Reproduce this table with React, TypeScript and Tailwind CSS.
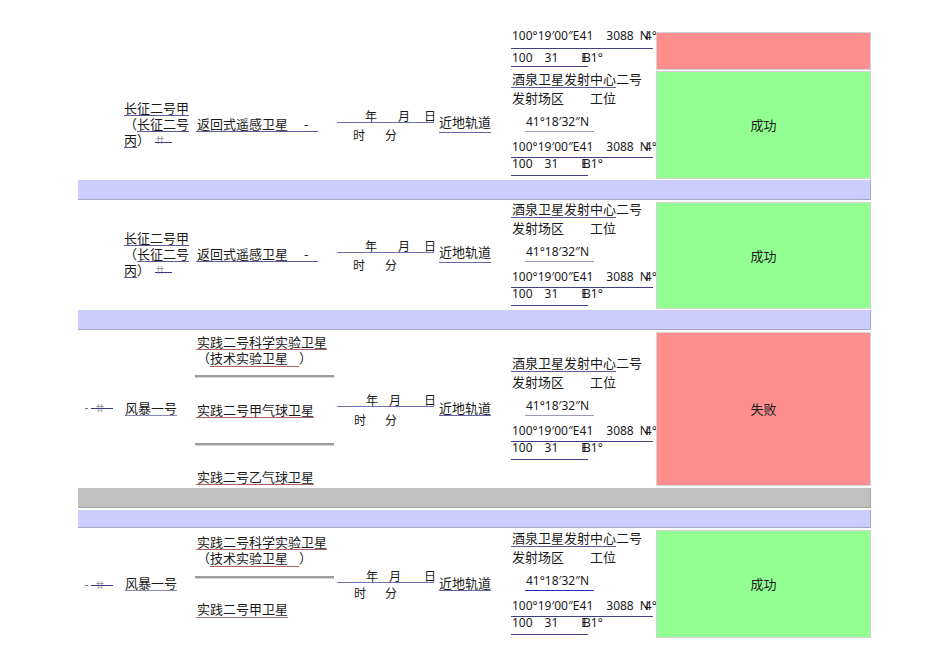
import React from "react";

const cjk = "font-['Noto_Sans_CJK_SC','Noto_Sans_CJK_JP',sans-serif]";
const latin = "font-['Noto_Sans','DejaVu_Sans',sans-serif]";

function Struck({ padTop }: { padTop: string }) {
  return (
    <div className={`w-[46px] ${padTop}`}>
      <div className="flex items-center h-[14px]">
        <span className="ml-[7px] w-[3px] h-px bg-[#777]" />
        <span className="relative ml-[3px] w-[22px] h-[14px] flex items-center">
          <span className={`ml-[5px] text-[8px] leading-[8px] text-[#888] ${cjk}`}>廿</span>
          <span className="absolute left-0 right-0 top-[7px] h-px bg-[#3a3a8a]" />
        </span>
      </div>
    </div>
  );
}

function DoubleLine({ mt }: { mt: string }) {
  return <div className={`${mt} -ml-[1px] w-[139px] h-[3px] border-t-2 border-[#9c9c9c] bg-[#d6d6d6]`} />;
}

function Site({ pt, l3 }: { pt: string; l3: string }) {
  return (
    <div className={`w-[145px] ${pt} text-[#1a1a1a]`}>
      <div className={`w-[105px] border-b border-[#5a5a9c] leading-[14px] pb-[1px] pl-[1px] whitespace-nowrap text-[13px] ${cjk}`}>
        酒泉卫星发射中心二号
      </div>
      <div className={`mt-[3px] flex leading-[14px] pl-[1px] whitespace-nowrap text-[13px] ${cjk}`}>
        <span>发射场区</span>
        <span className="ml-[26px]">工位</span>
      </div>
      <div className={`mt-[11px] ml-[14px] w-[69px] border-b ${l3} leading-[12px] pb-[3px] pl-[1px] whitespace-nowrap text-[12px] ${latin}`}>
        41°18′32″N
      </div>
      <div className={`mt-[9px] flex w-[142px] border-b border-[#404088] leading-[12px] pb-[4px] pl-[1px] whitespace-nowrap text-[12px] ${latin}`}>
        <span>100°19′00″E41</span>
        <span className="ml-[13px]">3088</span>
        <span className="ml-[6px]">N</span>
        <span className="-ml-[4px]">4°</span>
      </div>
      <div className={`flex w-[77px] border-b border-[#404088] leading-[12px] pb-[5px] pl-[1px] whitespace-nowrap text-[12px] ${latin}`}>
        <span>100</span>
        <span className="ml-[12px]">31</span>
        <span className="ml-[23px]">E</span>
        <span className="-ml-[5px]">B1°</span>
      </div>
    </div>
  );
}

function Status({ cls, label }: { cls: string; label: string }) {
  return (
    <div className="w-[215px]">
      <div className={`${cls} border border-[#d2d2d2] flex items-center justify-center text-[13px] text-[#1a1a1a] ${cjk}`}>
        {label}
      </div>
    </div>
  );
}

function DateCell({ pt, a, b, c, mt, d, e }: { pt: string; a: string; b: string; c: string; mt: string; d: string; e: string }) {
  return (
    <div className={`w-[101px] ${pt} text-[12px] text-[#1a1a1a] ${cjk}`}>
      <div className="flex w-[97px] border-b border-[#7070b0] leading-[12px] whitespace-nowrap">
        <span className={a}>年</span>
        <span className={b}>月</span>
        <span className={c}>日</span>
      </div>
      <div className={`${mt} flex leading-[12px] whitespace-nowrap`}>
        <span className={d}>时</span>
        <span className={e}>分</span>
      </div>
    </div>
  );
}

function Orbit({ pt, pb }: { pt: string; pb: string }) {
  return (
    <div className={`w-[73px] ${pt} text-[13px] text-[#1a1a1a] ${cjk}`}>
      <div className={`ml-[1px] w-fit border-b border-[#6464a8] leading-[14px] ${pb}`}>近地轨道</div>
    </div>
  );
}

function LongMarchRow({ boxCls }: { boxCls: string }) {
  return (
    <div className="flex h-[110px]">
      <div className="w-[46px]" />
      <div className={`w-[72px] pt-[31px] text-[13px] text-[#1a1a1a] ${cjk}`}>
        <div className="w-fit border-b border-[#5a5a9c] leading-[14px] whitespace-nowrap">长征二号甲</div>
        <div className="mt-[1px] flex leading-[14px] whitespace-nowrap">
          <span>（</span>
          <span className="border-b border-[#5a5a9c]">长征二号</span>
        </div>
        <div className="mt-[1px] flex leading-[14px] whitespace-nowrap">
          <span className="border-b border-[#5a5a9c]">丙</span>
          <span>）</span>
          <span className="relative ml-[5px] w-[17px] h-[14px] flex items-center">
            <span className="ml-[1px] text-[8px] leading-[8px] text-[#888]">廿</span>
            <span className="absolute left-0 right-0 top-[9px] h-px bg-[#3a3a8a]" />
          </span>
        </div>
      </div>
      <div className={`w-[141px] pt-[47px] text-[13px] text-[#1a1a1a] ${cjk}`}>
        <div className="flex w-[122px] border-b border-[#5a5a9c] leading-[14px] pl-[1px] whitespace-nowrap">
          <span>返回式遥感卫星</span>
          <span className="ml-[16px]">-</span>
        </div>
      </div>
      <DateCell pt="pt-[40px]" a="ml-[28px]" b="ml-[21px]" c="ml-[14px]" mt="mt-[6px]" d="ml-[16px]" e="ml-[20px]" />
      <Orbit pt="pt-[45px]" pb="pb-[3px]" />
      <Site pt="pt-[2px]" l3="border-[#9a9ab8]" />
      <Status cls={boxCls} label="成功" />
    </div>
  );
}

export default function App() {
  return (
    <div className="w-[950px] h-[672px] bg-white overflow-hidden">
      <div className="ml-[78px] w-[793px] flex flex-col">
        {/* Row A */}
        <div className="flex h-[70px]">
          <div className="w-[433px]" />
          <div className={`w-[145px] pt-[30px] text-[12px] text-[#1a1a1a] ${latin}`}>
            <div className="flex w-[142px] border-b border-[#404088] leading-[12px] pb-[6px] pl-[1px] whitespace-nowrap">
              <span>100°19′00″E41</span>
              <span className="ml-[13px]">3088</span>
              <span className="ml-[6px]">N</span>
              <span className="-ml-[4px]">4°</span>
            </div>
            <div className="mt-[3px] flex w-[77px] border-b border-[#404088] leading-[12px] pb-[2px] pl-[1px] whitespace-nowrap">
              <span>100</span>
              <span className="ml-[12px]">31</span>
              <span className="ml-[23px]">E</span>
              <span className="-ml-[5px]">B1°</span>
            </div>
          </div>
          <Status cls="mt-[32px] h-[38px] bg-[#ff8f8f]" label="" />
        </div>

        {/* Row B */}
        <LongMarchRow boxCls="mt-[1px] h-[108px] bg-[#93ff93]" />

        <div className="h-[20px] bg-[#ccccff] border-b border-r border-[#a8a8c8]" />

        {/* Row C */}
        <LongMarchRow boxCls="mt-[2px] h-[107px] bg-[#93ff93]" />

        <div className="h-[20px] bg-[#ccccff] border-b border-r border-[#a8a8c8]" />

        {/* Row D */}
        <div className="flex h-[158px]">
          <Struck padTop="pt-[71px]" />
          <div className={`w-[72px] pt-[71px] text-[13px] text-[#1a1a1a] ${cjk}`}>
            <div className="ml-[1px] w-fit border-b border-[#8888b0] leading-[14px]">风暴一号</div>
          </div>
          <div className={`w-[141px] pt-[5px] text-[13px] text-[#1a1a1a] ${cjk}`}>
            <div className="w-fit border-b border-[#b06060] leading-[14px] pl-[1px] whitespace-nowrap">实践二号科学实验卫星</div>
            <div className="mt-[1px] flex leading-[14px] pl-[1px] whitespace-nowrap">
              <span>（</span>
              <span className="border-b border-[#b06060] pr-[11px] pb-[1px]">技术实验卫星</span>
              <span>）</span>
            </div>
            <DoubleLine mt="mt-[8px]" />
            <div className="mt-[25px] w-fit border-b border-[#b06060] leading-[14px] pl-[1px] whitespace-nowrap">实践二号甲气球卫星</div>
            <DoubleLine mt="mt-[25px]" />
            <div className="mt-[24px] w-fit border-b border-[#b06060] leading-[14px] pl-[1px] whitespace-nowrap">实践二号乙气球卫星</div>
          </div>
          <DateCell pt="pt-[64px]" a="ml-[29px]" b="ml-[11px]" c="ml-[23px]" mt="mt-[7px]" d="ml-[17px]" e="ml-[19px]" />
          <Orbit pt="pt-[71px]" pb="pb-0" />
          <Site pt="pt-[26px]" l3="border-[#9a9ab8]" />
          <Status cls="mt-[2px] h-[154px] bg-[#ff8f8f]" label="失败" />
        </div>

        <div className="h-[20px] bg-[#c0c0c0] border-b border-r border-[#a8a8a8]" />
        <div className="mt-[2px] h-[18px] bg-[#ccccff] border-b border-r border-[#a8a8c8]" />

        {/* Row E */}
        <div className="flex h-[112px]">
          <Struck padTop="pt-[50px]" />
          <div className={`w-[72px] pt-[48px] text-[13px] text-[#1a1a1a] ${cjk}`}>
            <div className="ml-[1px] w-fit border-b border-[#8888b0] leading-[14px]">风暴一号</div>
          </div>
          <div className={`w-[141px] pt-[7px] text-[13px] text-[#1a1a1a] ${cjk}`}>
            <div className="w-fit border-b border-[#b06060] leading-[14px] pl-[1px] whitespace-nowrap">实践二号科学实验卫星</div>
            <div className="mt-[1px] flex leading-[14px] pl-[1px] whitespace-nowrap">
              <span>（</span>
              <span className="border-b border-[#b06060] pr-[11px] pb-[1px]">技术实验卫星</span>
              <span>）</span>
            </div>
            <DoubleLine mt="mt-[9px]" />
            <div className="mt-[23px] w-fit border-b border-[#a07878] leading-[14px] pb-[1px] pl-[1px] whitespace-nowrap">实践二号甲卫星</div>
          </div>
          <DateCell pt="pt-[42px]" a="ml-[29px]" b="ml-[11px]" c="ml-[23px]" mt="mt-[4px]" d="ml-[17px]" e="ml-[19px]" />
          <Orbit pt="pt-[48px]" pb="pb-0" />
          <Site pt="pt-[3px]" l3="border-[#2828c8]" />
          <Status cls="mt-[2px] h-[108px] bg-[#93ff93]" label="成功" />
        </div>
      </div>
    </div>
  );
}
